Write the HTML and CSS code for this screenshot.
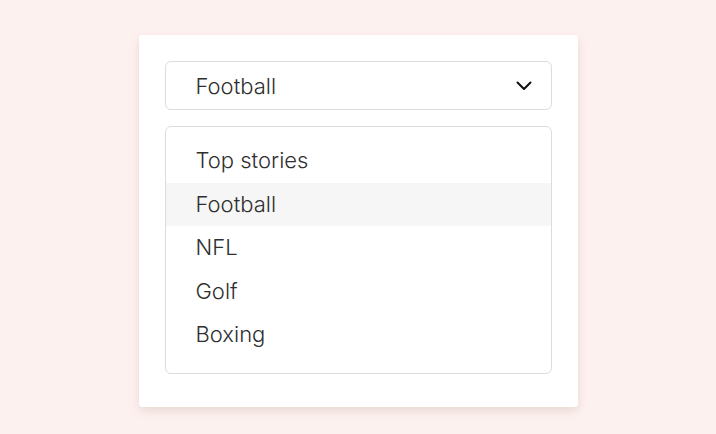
FILE: index.html
```html
<!DOCTYPE html>
<html>
<head>
    <title>Dropdown</title>
    <link rel="stylesheet" href="styles.css">
</head>
<body>
    <div class="card">
        <div class="select">
            <span class="select-value">Football</span>
            <svg class="chevron" width="16" height="10" viewBox="0 0 16 10">
                <path d="M1.5 1.5 L8 8 L14.5 1.5" fill="none" stroke="#111" stroke-width="2" stroke-linecap="round" stroke-linejoin="round"/>
            </svg>
        </div>
        <ul class="options">
            <li class="option">Top stories</li>
            <li class="option selected">Football</li>
            <li class="option">NFL</li>
            <li class="option">Golf</li>
            <li class="option">Boxing</li>
        </ul>
    </div>
</body>
</html>
```

FILE: styles.css
```css
body {
    margin: 0;
    background-color: #fdf1ef;
    font-family: Inter, "Noto Sans", sans-serif;
    font-weight: 300;
    color: #2f2f2f;
    height: 434px;
}

.card {
    width: 387px;
    margin: 35px auto 0;
    padding: 26px 26px 33px;
    background-color: #fff;
    border-radius: 3px;
    box-shadow: 0 4px 10px rgba(120, 80, 70, 0.15);
}

.select {
    display: flex;
    align-items: center;
    justify-content: space-between;
    height: 47px;
    padding: 0 19px 0 30px;
    border: 1px solid #dcdcdc;
    border-radius: 6px;
    font-size: 22px;
}

.chevron {
    display: block;
}

.options {
    list-style: none;
    margin: 16px 0 0;
    padding: 12px 0 16px;
    border: 1px solid #dcdcdc;
    border-radius: 6px;
}

.option {
    height: 43.5px;
    line-height: 43.5px;
    padding-left: 30px;
    font-size: 22px;
}

.option.selected {
    background-color: #f6f6f6;
}
```
